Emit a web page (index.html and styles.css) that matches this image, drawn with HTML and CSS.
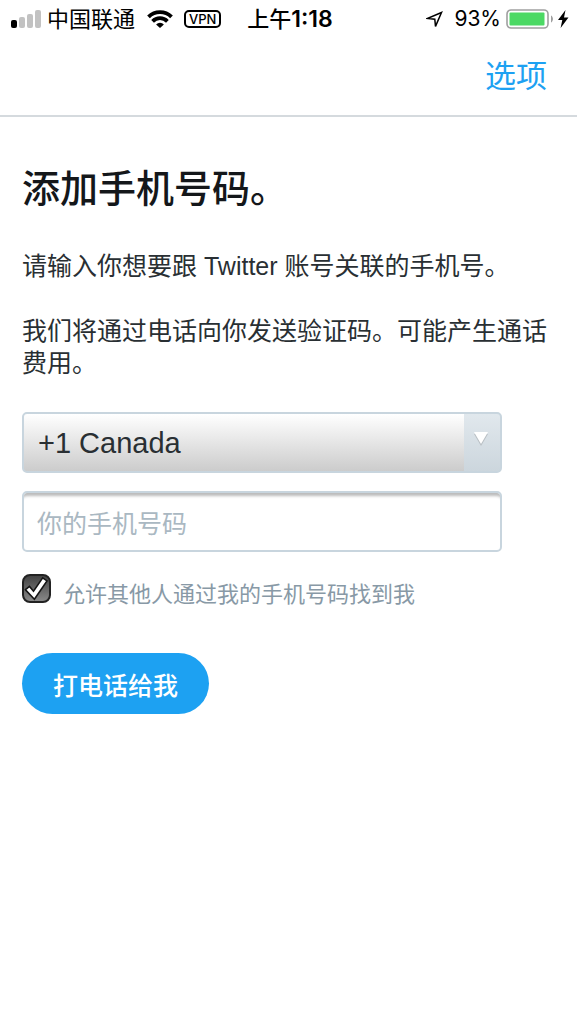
FILE: index.html
```html
<!DOCTYPE html>
<html lang="zh-CN">
<head>
    <meta charset="UTF-8">
    <meta name="viewport" content="width=device-width, initial-scale=1.0">
    <title>添加手机号码</title>
    <link rel="stylesheet" href="styles.css">
</head>
<body>
    <!-- Status bar -->
    <div class="status-bar">
        <div class="status-left">
            <svg width="30" height="18" viewBox="0 0 30 18">
                <rect x="0" y="10" width="6" height="8" rx="2" fill="#000"/>
                <rect x="8" y="7" width="6" height="11" rx="2" fill="#c2c2c2"/>
                <rect x="16" y="4" width="6" height="14" rx="2" fill="#c2c2c2"/>
                <rect x="24" y="0" width="6" height="18" rx="2" fill="#c2c2c2"/>
            </svg>
            <span class="carrier">中国联通</span>
            <svg class="wifi" width="26" height="18" viewBox="0 0 26 18">
                <g fill="none" stroke="#000" stroke-width="3.8">
                    <path d="M1.5 6.9a16.3 16.3 0 0 1 23 0"/>
                    <path d="M5.6 11.3a10.4 10.4 0 0 1 14.8 0"/>
                </g>
                <path d="M13 18l-3.9-3.6a5.5 5.5 0 0 1 7.8 0z" fill="#000"/>
            </svg>
            <span class="vpn">VPN</span>
        </div>
        <span class="time">上午<b>1:18</b></span>
        <div class="status-right">
            <svg width="17" height="17" viewBox="0 0 17 17">
                <path d="M15.5 1.5L1.8 7.4l7 .8.7 7.2z" fill="none" stroke="#000" stroke-width="1.5" stroke-linejoin="miter"/>
            </svg>
            <span class="percent">93%</span>
            <svg width="48" height="20" viewBox="0 0 48 20">
                <rect x="1" y="1" width="41" height="18" rx="4" fill="#fff" stroke="#a0a0a0" stroke-width="1.6"/>
                <rect x="3.5" y="3.5" width="35" height="13" rx="1" fill="#4cd964"/>
                <path d="M45 6.5v7c2.6-1.2 2.6-5.8 0-7z" fill="#a0a0a0"/>
            </svg>
            <svg class="bolt" width="11" height="18" viewBox="0 0 11 18">
                <path d="M7.5 0L0 10h4.3L2.6 18 10.5 7.5H6z" fill="#000"/>
            </svg>
        </div>
    </div>

    <header class="header">
        <a href="#" class="options">选项</a>
    </header>

    <main class="container">
        <h1>添加手机号码。</h1>
        <p>请输入你想要跟 Twitter 账号关联的手机号。</p>
        <p>我们将通过电话向你发送验证码。可能产生通话费用。</p>

        <!-- Phone form -->
        <form id="phoneForm">
            <div class="select-wrap">
                <select id="country" aria-label="国家/地区">
                    <option>+1 Canada</option>
                </select>
                <svg class="arrow" viewBox="0 0 14 14">
                    <path d="M0 2h14L7 14z" fill="#b9bfc4"/>
                    <path d="M0 0h14L7 12z" fill="#fff"/>
                </svg>
            </div>
            <input type="tel" id="phone" class="phone" placeholder="你的手机号码" aria-label="你的手机号码">
            <div class="form-group">
                <span class="check">
                    <input type="checkbox" id="discoverable" checked>
                    <svg viewBox="0 0 29 29">
                        <path d="M3.5 15.7l4-3.3 4 4.8L20.7 3.8l4.3 3.1-12.6 18.3z" fill="#fff" stroke="#151515" stroke-width="1.6"/>
                    </svg>
                </span>
                <label for="discoverable">允许其他人通过我的手机号码找到我</label>
            </div>
            <button type="submit">打电话给我</button>
        </form>
    </main>
</body>
</html>
```

FILE: styles.css
```css
* { box-sizing: border-box; }
body { margin: 0; background: #fff; color: #292f33; font-family: "Liberation Sans", "Noto Sans CJK SC", sans-serif; font-size: 25px; line-height: 32px; }

.status-bar { display: grid; grid-template-columns: 1fr auto 1fr; align-items: center; height: 38px; padding: 0 8px 0 11px; color: #000; font-family: Inter, "Noto Sans CJK SC", sans-serif; font-size: 22px; }
.status-left, .status-right { display: flex; align-items: center; }
.status-right { justify-content: flex-end; }
.carrier { margin: 0 12px 0 6px; }
.wifi { margin-right: 11px; }
.vpn { padding: 0 3px; border: 2px solid #000; border-radius: 5px; font-size: 13px; line-height: 14px; font-weight: 500; }
.time { font-weight: 500; }
.time b { font-size: 23px; font-weight: 600; }
.percent { margin: 0 5px 0 11px; font-size: 21px; }
.bolt { margin-left: 4px; }

.header { display: flex; align-items: center; justify-content: flex-end; height: 79px; padding: 0 30px; border-bottom: 2px solid #d5dade; }
.options { color: #1da1f2; font-size: 31px; text-decoration: none; }

.container { padding: 48px 22px; }
h1 { margin: 0 0 37px; color: #14171a; font-size: 38px; line-height: 48px; font-weight: 500; }
p { margin: 0 0 33px; }

.select-wrap { position: relative; width: 90%; margin-bottom: 18px; }
select, .phone { display: block; height: 61px; border: 2px solid #c8d5de; border-radius: 5px; font-family: inherit; }
select { width: 100%; padding: 0 50px 0 14px; appearance: none; background: linear-gradient(#e1e8ed, #ccd6dd) right / 36px 100% no-repeat, linear-gradient(#fff, #ccc); color: #292f33; font-size: 29px; }
.arrow { position: absolute; top: 20px; right: 14px; width: 14px; height: 14px; pointer-events: none; }
.phone { width: 90%; padding: 6px 13px 0; box-shadow: inset 0 6px 3px -3px #bbb; font-size: 25px; }
.phone::placeholder { color: #aab8c2; opacity: 1; }

.form-group { display: flex; align-items: flex-start; margin: 22px 0 42px; color: #8899a6; font-size: 22px; }
.form-group label { padding-top: 5px; }
.check { display: grid; margin-right: 12px; }
.check input, .check svg { grid-area: 1 / 1; width: 29px; height: 29px; margin: 0; }
.check input { appearance: none; border: 2px solid #222; border-radius: 8px; background: linear-gradient(#444, #888); }
.check svg { display: none; pointer-events: none; }
.check input:checked + svg { display: block; }

button { height: 61px; padding: 0 31px; border: none; border-radius: 31px; background: #1da1f2; color: #fff; font-family: inherit; font-size: 25px; font-weight: 500; cursor: pointer; }
button:hover { background: #0c85d0; }
```
